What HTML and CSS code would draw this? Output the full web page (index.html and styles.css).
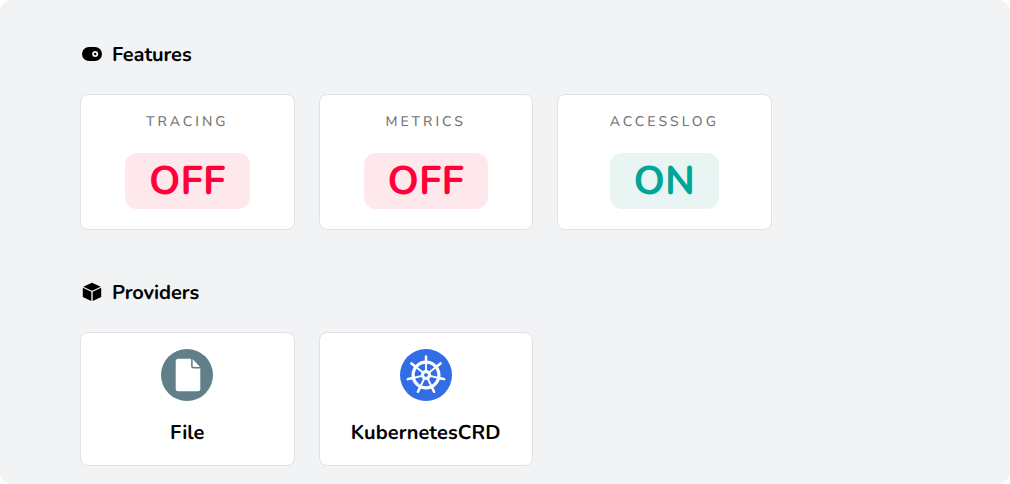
FILE: index.html
```html
<!DOCTYPE html>
<html lang="en">
<head>
<meta charset="utf-8">
<title>Dashboard</title>
<link rel="stylesheet" href="styles.css">
</head>
<body>
<main class="page">
  <section class="section">
    <h2 class="heading">
      <svg class="heading-icon" viewBox="0 0 22 22"><path fill-rule="evenodd" d="M8 4h6a7 7 0 0 1 0 14H8A7 7 0 0 1 8 4Zm6.2 4a3 3 0 1 0 0 6 3 3 0 0 0 0-6Zm0 1.8a1.2 1.2 0 1 1 0 2.4 1.2 1.2 0 0 1 0-2.4Z"/></svg>
      <span class="heading-text">Features</span>
    </h2>
    <div class="cards">
      <article class="card feature">
        <h3 class="label">TRACING</h3>
        <div class="status off">OFF</div>
      </article>
      <article class="card feature">
        <h3 class="label">METRICS</h3>
        <div class="status off">OFF</div>
      </article>
      <article class="card feature">
        <h3 class="label">ACCESSLOG</h3>
        <div class="status on">ON</div>
      </article>
    </div>
  </section>
  <section class="section">
    <h2 class="heading">
      <svg class="heading-icon" viewBox="0 0 22 22"><path d="M11 1.8 19.8 5.7 11 9.7 2.2 5.7ZM1.8 6.8 10.3 10.7V20L1.8 15.9ZM20.2 6.8 11.7 10.7V20l8.5-4.1Z"/></svg>
      <span class="heading-text">Providers</span>
    </h2>
    <div class="cards">
      <article class="card provider">
        <svg class="logo" viewBox="0 0 52 52">
          <circle cx="26" cy="26" r="26" fill="#607f89"/>
          <path fill="#fff" d="M17.2 9.7h12.9v7.2q0 2.5 2.5 2.5h6.7v20.4q0 2.5-2.5 2.5H17.2q-2.5 0-2.5-2.5V12.2q0-2.5 2.5-2.5Z"/>
          <path fill="#fff" d="M31.6 9.9 39 18.1h-5.9q-1.5 0-1.5-1.5Z"/>
        </svg>
        <h3 class="name">File</h3>
      </article>
      <article class="card provider">
        <svg class="logo" viewBox="0 0 52 52">
          <defs>
            <g id="spoke"><path d="M26 23.2V8" stroke-width="1.9"/><path d="M26 11.5V7.4" stroke-width="2.5"/></g>
          </defs>
          <circle cx="26" cy="26" r="26" fill="#326de6"/>
          <g fill="none" stroke="#fff" stroke-linecap="round">
            <circle cx="26" cy="26" r="12.9" stroke-width="3.2"/>
            <circle cx="26" cy="26" r="3.6" stroke-width="3"/>
            <use href="#spoke"/>
            <use href="#spoke" transform="rotate(51.43 26 26)"/>
            <use href="#spoke" transform="rotate(102.86 26 26)"/>
            <use href="#spoke" transform="rotate(154.29 26 26)"/>
            <use href="#spoke" transform="rotate(205.71 26 26)"/>
            <use href="#spoke" transform="rotate(257.14 26 26)"/>
            <use href="#spoke" transform="rotate(308.57 26 26)"/>
          </g>
        </svg>
        <h3 class="name kube">KubernetesCRD</h3>
      </article>
    </div>
  </section>
</main>
</body>
</html>
```
FILE: styles.css
```css
* { box-sizing: border-box; }
body { margin: 0; background: #fff; font-family: Nunito, Lato, "Open Sans", sans-serif; text-rendering: geometricPrecision; }
h2, h3 { margin: 0; }
.page {
  display: flex;
  flex-direction: column;
  gap: 48px;
  height: 484px;
  padding: 40px 80px 0;
  border-radius: 12px;
  background: #f1f3f5;
  overflow: hidden;
}
.heading {
  display: flex;
  align-items: center;
  gap: 9px;
  height: 28px;
  margin-bottom: 26px;
  padding-left: 1px;
  font-size: 20px;
  line-height: 28px;
  font-weight: 700;
}
.heading-icon { width: 22px; height: 22px; }
.heading-text { padding-top: 4px; letter-spacing: -.08px; }
.cards { display: grid; grid-template-columns: repeat(3, 214.5px); gap: 24px; }
.card {
  display: flex;
  flex-direction: column;
  align-items: center;
  border: 1px solid #dfe1e4;
  border-radius: 8px;
  background: #fff;
}
.feature { height: 136px; padding-top: 16px; }
.label {
  height: 20px;
  margin-bottom: 22px;
  color: #747474;
  font-size: 14px;
  line-height: 21px;
  font-weight: 500;
  letter-spacing: 3px;
  white-space: nowrap;
}
.status {
  display: flex;
  justify-content: center;
  height: 56px;
  border-radius: 12px;
  font-size: 40px;
  line-height: 59px;
  font-weight: 700;
}
.off { width: 124.5px; background: #ffe8ec; color: #ff0039; }
.on { width: 109px; background: #e8f5f3; color: #00a697; }
.provider { height: 134px; padding-top: 16px; }
.logo { width: 52px; height: 52px; margin-bottom: 19px; }
.name { font-size: 20px; line-height: 28px; font-weight: 700; }
.kube { letter-spacing: .1px; }
```
